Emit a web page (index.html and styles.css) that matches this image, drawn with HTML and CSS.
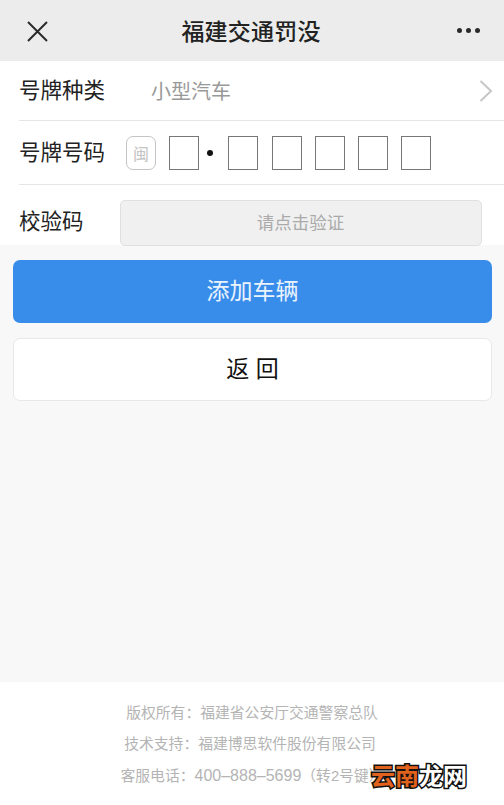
FILE: index.html
```html
<!DOCTYPE html>
<html lang="zh-CN">
<head>
    <meta charset="UTF-8">
    <meta name="viewport" content="width=device-width, initial-scale=1.0">
    <title>福建交通罚没</title>
    <link rel="stylesheet" href="styles.css">
</head>
<body>
    <div class="container">
        <!-- 顶部标题栏 -->
        <div class="topbar">
            <svg class="icon-close" width="24" height="24" viewBox="0 0 24 24">
                <path d="M3 3 L22 22 M22 3 L3 22" stroke="#2a2a2a" stroke-width="2" fill="none"/>
            </svg>
            <h1>福建交通罚没</h1>
            <div class="more"><span></span><span></span><span></span></div>
        </div>

        <!-- 表单 -->
        <div class="form">
            <div class="row row-type">
                <span class="label">号牌种类</span>
                <span class="value">小型汽车</span>
                <svg class="arrow" width="14" height="24" viewBox="0 0 14 24">
                    <path d="M1.5 2 L12 12 L1.5 22" stroke="#c6c6c6" stroke-width="2" fill="none"/>
                </svg>
            </div>
            <div class="row row-plate">
                <span class="label">号牌号码</span>
                <span class="province">闽</span>
                <span class="box"></span>
                <span class="dot"></span>
                <span class="box"></span>
                <span class="box"></span>
                <span class="box"></span>
                <span class="box"></span>
                <span class="box"></span>
            </div>
            <div class="row row-code">
                <span class="label">校验码</span>
                <div class="verify">请点击验证</div>
            </div>
        </div>

        <!-- 按钮 -->
        <div class="buttons">
            <button class="btn btn-add">添加车辆</button>
            <button class="btn btn-back">返 回</button>
        </div>

        <!-- 页脚 -->
        <div class="footer">
            <p>版权所有：福建省公安厅交通警察总队</p>
            <p>技术支持：福建博思软件股份有限公司</p>
            <p>客服电话：<span class="phone">400–888–5699</span>（转2号键）</p>
        </div>

        <div class="watermark"><span class="orange">云南</span><span class="white">龙网</span></div>
    </div>
</body>
</html>
```

FILE: styles.css
```css
* {
    margin: 0;
    padding: 0;
    box-sizing: border-box;
}

body {
    font-family: "Liberation Sans", "Noto Sans CJK SC", sans-serif;
    background-color: #f8f8f8;
    color: #222;
}

.container {
    position: relative;
    display: flex;
    flex-direction: column;
    height: 805px;
    overflow: hidden;
}

.topbar {
    display: flex;
    align-items: center;
    justify-content: space-between;
    height: 61px;
    padding: 0 24px 0 25px;
    background-color: #ececec;
}

.topbar h1 {
    margin-right: 4px;
    padding-bottom: 2px;
    font-size: 23px;
    font-weight: 500;
    color: #222;
    letter-spacing: 0.2px;
}

.more {
    display: flex;
    gap: 4px;
}

.more span {
    width: 5px;
    height: 5px;
    border-radius: 50%;
    background-color: #2a2a2a;
}

.form {
    height: 184px;
    padding-left: 19px;
    background-color: #fff;
}

.row {
    display: flex;
    align-items: center;
}

.label {
    font-size: 21.5px;
    color: #222;
}

.row-type {
    height: 60px;
    padding-right: 11px;
    border-bottom: 1px solid #e6e6e6;
}

.row-type .label,
.row-plate .label {
    padding-bottom: 4px;
}

.value {
    flex: 1;
    margin-left: 46px;
    font-size: 20px;
    color: #999;
}

.row-plate {
    height: 64px;
    border-bottom: 1px solid #e6e6e6;
}

.province {
    display: flex;
    align-items: center;
    justify-content: center;
    width: 30px;
    height: 34px;
    margin-left: 21px;
    border: 1px solid #c4c4c4;
    border-radius: 7px;
    font-size: 16px;
    color: #c4c4c4;
}

.box {
    width: 30px;
    height: 34px;
    margin-left: 13.25px;
    border: 1px solid #777;
}

.dot {
    width: 6px;
    height: 6px;
    margin: 0 5px 0 8px;
    border-radius: 50%;
    background-color: #111;
}

.dot + .box {
    margin-left: 10px;
}

.row-code {
    height: 60px;
    padding: 15px 0 0;
    align-items: flex-start;
}

.row-code .label {
    line-height: 44px;
}

.verify {
    width: 362px;
    height: 46px;
    margin-left: 36px;
    background-color: #f0f0f0;
    border: 1px solid #e0e0e0;
    border-radius: 5px;
    font-size: 17.5px;
    line-height: 44px;
    text-align: center;
    color: #aaa;
}

.buttons {
    flex: 1;
    padding: 15px 12px 0 13px;
}

.btn {
    display: block;
    width: 100%;
    height: 63px;
    padding-bottom: 6px;
    border-radius: 7px;
    font-family: inherit;
    font-size: 23px;
}

.btn-add {
    border: none;
    background-color: #398dea;
    color: #eaf3fd;
}

.btn-back {
    margin-top: 15px;
    background-color: #fff;
    border: 1px solid #e8e8e8;
    color: #111;
}

.footer {
    height: 123px;
    padding-top: 16px;
    background-color: #fff;
    text-align: center;
    font-size: 14.8px;
    line-height: 31px;
    color: #b4b4b4;
}

.footer p:nth-child(2) {
    padding-right: 4px;
}

.phone {
    font-size: 16px;
}

.watermark {
    position: absolute;
    left: 371px;
    top: 761px;
    font-size: 24px;
    font-weight: 700;
    line-height: 32px;
    -webkit-text-stroke: 3px #111;
    paint-order: stroke fill;
}

.orange {
    color: #e0621c;
}

.white {
    color: #fff;
}
```
